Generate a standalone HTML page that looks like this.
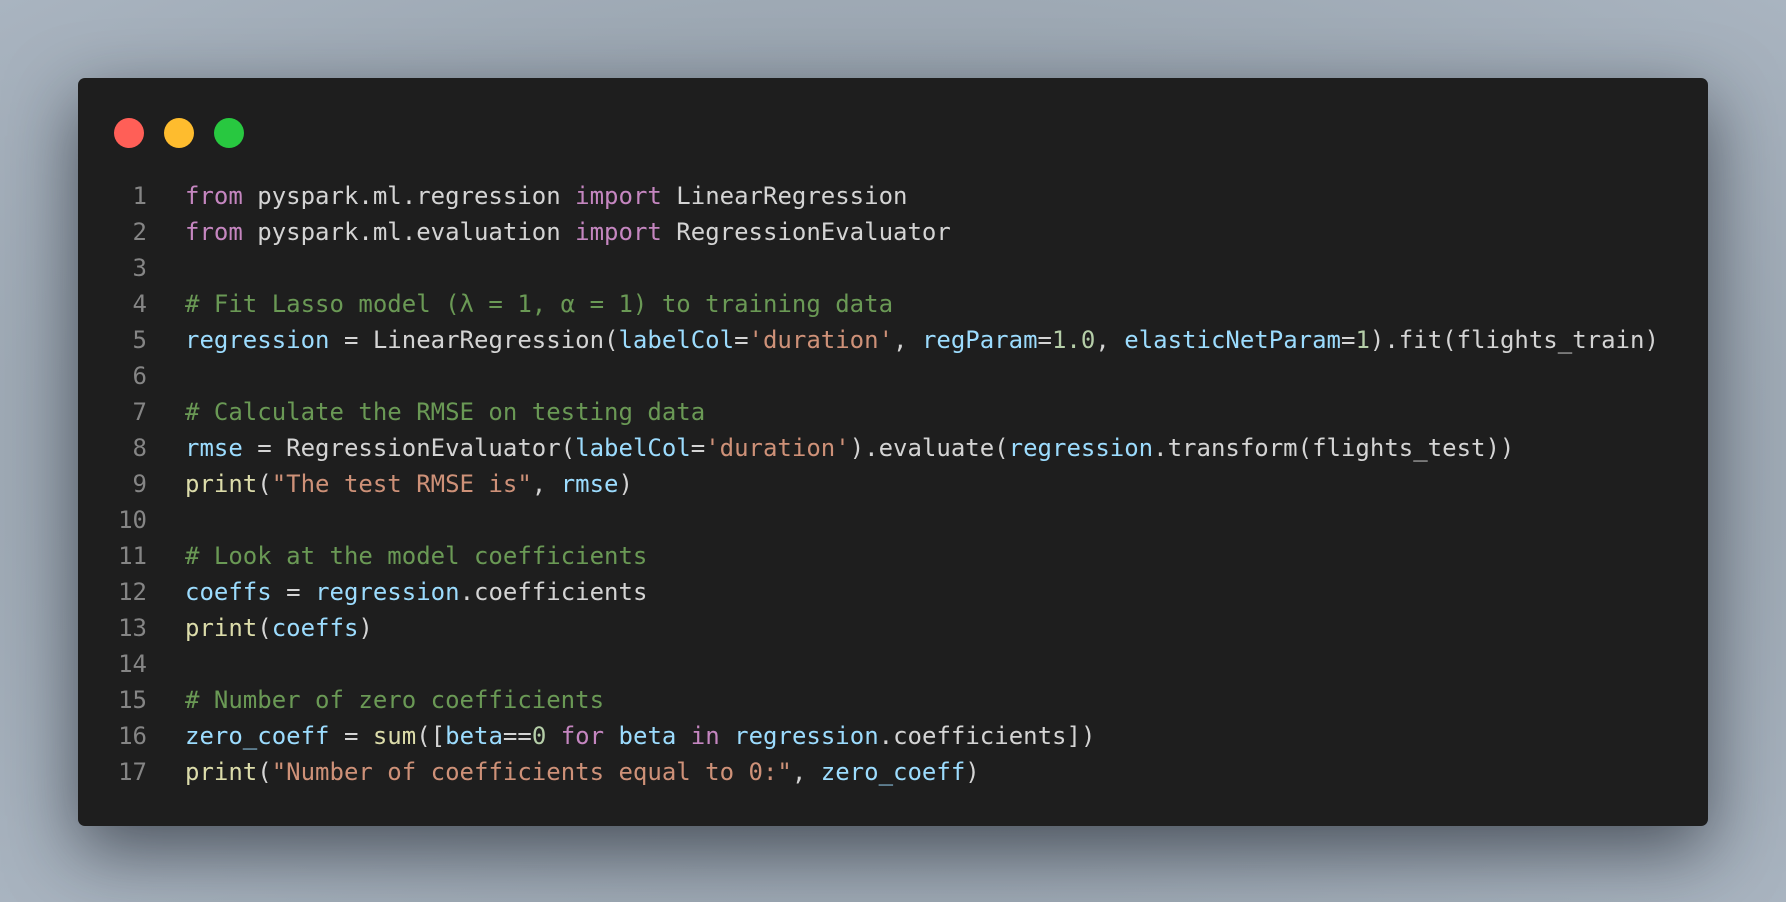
<!DOCTYPE html>
<html><head><meta charset="utf-8"><style>
html,body{margin:0;padding:0;width:1786px;height:902px;overflow:hidden;}
body{background:radial-gradient(ellipse at 50% 50%,#8d96a0 0%,#9aa5b0 60%,#a9b4c0 100%);position:relative;}
.win{position:absolute;left:78px;top:78px;width:1630px;height:748px;background:#1e1e1e;border-radius:7px;box-shadow:0 24px 70px rgba(20,25,35,0.6);}
.dot{position:absolute;top:40px;width:30px;height:30px;border-radius:50%;}
.code{position:absolute;left:0;top:100px;margin:0;font-family:"DejaVu Sans Mono","Liberation Mono",monospace;font-size:24px;line-height:36px;color:#d4d4d4;white-space:pre;}
.ln{display:inline-block;width:69px;text-align:right;color:#858585;margin-right:38px;}
.k{color:#c586c0}.v{color:#9cdcfe}.s{color:#ce9178}.c{color:#6a9955}.f{color:#dcdcaa}.n{color:#b5cea8}
</style></head><body>
<div class="win">
<div class="dot" style="left:36px;background:#ff5f57"></div>
<div class="dot" style="left:86px;background:#febc2e"></div>
<div class="dot" style="left:136px;background:#28c840"></div>
<pre class="code"><span class="ln">1</span><span class="k">from</span> pyspark.ml.regression <span class="k">import</span> LinearRegression
<span class="ln">2</span><span class="k">from</span> pyspark.ml.evaluation <span class="k">import</span> RegressionEvaluator
<span class="ln">3</span>
<span class="ln">4</span><span class="c"># Fit Lasso model (λ = 1, α = 1) to training data</span>
<span class="ln">5</span><span class="v">regression</span> = LinearRegression(<span class="v">labelCol</span>=<span class="s">'duration'</span>, <span class="v">regParam</span>=<span class="n">1.0</span>, <span class="v">elasticNetParam</span>=<span class="n">1</span>).fit(flights_train)
<span class="ln">6</span>
<span class="ln">7</span><span class="c"># Calculate the RMSE on testing data</span>
<span class="ln">8</span><span class="v">rmse</span> = RegressionEvaluator(<span class="v">labelCol</span>=<span class="s">'duration'</span>).evaluate(<span class="v">regression</span>.transform(flights_test))
<span class="ln">9</span><span class="f">print</span>(<span class="s">"The test RMSE is"</span>, <span class="v">rmse</span>)
<span class="ln">10</span>
<span class="ln">11</span><span class="c"># Look at the model coefficients</span>
<span class="ln">12</span><span class="v">coeffs</span> = <span class="v">regression</span>.coefficients
<span class="ln">13</span><span class="f">print</span>(<span class="v">coeffs</span>)
<span class="ln">14</span>
<span class="ln">15</span><span class="c"># Number of zero coefficients</span>
<span class="ln">16</span><span class="v">zero_coeff</span> = <span class="f">sum</span>([<span class="v">beta</span>==<span class="n">0</span> <span class="k">for</span> <span class="v">beta</span> <span class="k">in</span> <span class="v">regression</span>.coefficients])
<span class="ln">17</span><span class="f">print</span>(<span class="s">"Number of coefficients equal to 0:"</span>, <span class="v">zero_coeff</span>)</pre>
</div>
</body></html>
